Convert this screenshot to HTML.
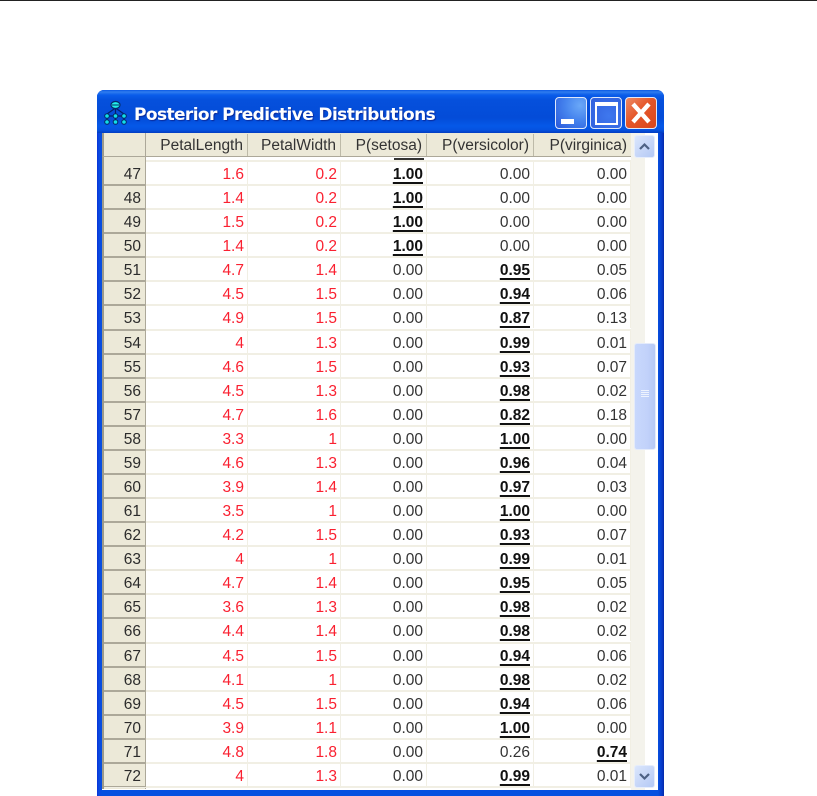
<!DOCTYPE html>
<html>
<head>
<meta charset="utf-8">
<style>
html,body{margin:0;padding:0;width:817px;height:796px;background:#fff;overflow:hidden}
body{position:relative;font-family:"Liberation Sans",sans-serif}
#top{position:absolute;left:0;top:0;width:817px;height:1px;background:#222}
#win{position:absolute;left:97px;top:90px;width:567px;height:706px;background:linear-gradient(90deg,#0831d9 0,#0a4be0 2px,#0a4be0 3px,#0650e0 5px,#0650e0 561px,#0638c8 565px,#0428a8 567px);border-radius:7px 7px 0 0;overflow:hidden}
#tb{position:absolute;left:0;top:0;width:567px;height:43px;background:linear-gradient(180deg,#0a58e4 0,#2f7cef 2px,#0a5cea 5px,#0550dc 10px,#044cd8 28px,#0558e8 36px,#0552e0 40px,#033cc0 43px)}
#title{position:absolute;left:37px;top:15px;color:#fff;font:bold 17px "DejaVu Sans",sans-serif;letter-spacing:-.6px;white-space:nowrap;text-shadow:1px 1px 1px #0a2a9a}
#icon{position:absolute;left:6px;top:10px}
.b{position:absolute;top:7px;width:32px;height:32px;box-sizing:border-box;border:1px solid #dfe8fb;border-radius:4px}
#min{left:458px;background:radial-gradient(circle at 80% 25%,#6aa8f8 0,#4684ee 45%,#2a58da 100%)}
#min i{position:absolute;left:5px;top:21px;width:13px;height:5px;background:#fff}
#max{left:493px;background:radial-gradient(circle at 60% 60%,#3f78ee 0,#2f5edc 100%)}
#max i{position:absolute;left:4px;top:4px;width:23px;height:23px;box-sizing:border-box;border:2px solid #fff;border-top-width:4px}
#cls{left:528px;background:linear-gradient(135deg,#ec8a66 0,#e5562a 45%,#d8461c 100%)}
#cls svg{position:absolute;left:0;top:0}
#client{position:absolute;left:5px;top:43px;width:556px;height:657px;background:#fff;overflow:hidden}
#hdr{position:absolute;left:0;top:0;width:529px;height:23px;background:#ece9d8;border-bottom:1px solid #aca899;font-size:15.5px;color:#333}
.h{position:absolute;top:1px;height:22px;line-height:24px;text-align:right;border-right:1px solid #bdbaa8;box-sizing:border-box;padding-right:4px}
#rh{position:absolute;left:0;top:24px;width:44px;height:632px;background:#ece9d8;border-left:2px solid #9c9a8c;border-right:1px solid #aca899;box-sizing:border-box}
#hh{position:absolute;left:0;top:0;width:44px;height:24px;border-left:2px solid #9c9a8c;border-right:1px solid #aca899;border-bottom:1px solid #aca899;box-sizing:border-box}
#part{position:absolute;left:44px;top:24px;width:485px;height:5px;background:#fff;border-bottom:2px solid #f1efe4;box-sizing:border-box}
#u{position:absolute;left:292px;top:25px;width:30px;height:2px;background:#333}
#rows{position:absolute;left:3px;top:29px;width:526px;font-size:15.5px;color:#333}
.r{position:relative;height:24.08px;box-sizing:border-box;border-bottom:2px solid #f1efe4}
.r span{position:absolute;top:0;height:22px;line-height:25px;text-align:right;box-sizing:border-box;padding-right:3px;border-right:1px solid #f1efe4}
.r span:nth-child(1){left:0;width:41px;background:#ece9d8;padding-right:4px;color:#2c2c2c;border-right:1px solid #aca899}
.r span:nth-child(2){left:41px;width:102px;color:#fa2030}
.r span:nth-child(3){left:143px;width:93px;color:#fa2030}
.r span:nth-child(4){left:236px;width:86px}
.r span:nth-child(5){left:322px;width:107px}
.r span:nth-child(6){left:429px;width:97px}
.r::before{content:"";position:absolute;left:-1px;right:485px;bottom:-2px;height:2px;background:#aca899}
.r:last-child::before{height:1px;bottom:-1px}
b{color:#111;text-decoration:underline;text-decoration-thickness:1.5px;text-underline-offset:2.5px}
#sb{position:absolute;left:529px;top:0;width:27px;height:657px;background:linear-gradient(90deg,#f4f3ec 0,#f4f3ec 14px,#fff 14px,#fff 27px)}
.sbb{position:absolute;left:3px;width:21px;height:23px;box-sizing:border-box;border:1px solid #e6edfb;border-radius:3px;background:linear-gradient(135deg,#dbe6fc,#b4c9f5)}
#thumb{position:absolute;left:3px;top:210px;width:22px;height:107px;box-sizing:border-box;border:1px solid #e4ebfa;border-radius:3px;background:linear-gradient(90deg,#c8d8fc,#c2d2fa 60%,#b6c9f5)}
#thumb i{position:absolute;left:6px;height:1px;width:8px;background:#eef3fe}
#botw{position:absolute;left:0;top:656px;width:556px;height:1px;background:#fff}
</style>
</head>
<body>
<div id="top"></div>
<div id="win">
<div id="tb"></div>
<svg id="icon" width="28" height="26" viewBox="0 0 28 26">
<path d="M12.5 6V22M12.5 8L4 14M12.5 8L21 14M4 15V22M21 15V22M4 16H21" stroke="#03206a" fill="none" stroke-width="1.2"/>
<ellipse cx="12.5" cy="5" rx="4.5" ry="3.5" fill="#20f0e8" stroke="#042a68" stroke-width="1.2"/>
<path d="M9 5H16" stroke="#042a68" stroke-width="1"/>
<g fill="#10e0e8" stroke="#042a68" stroke-width="1">
<circle cx="4" cy="16" r="2.3"/><circle cx="12.5" cy="16" r="2.3"/><circle cx="21" cy="16" r="2.3"/>
<circle cx="4" cy="22" r="2.3"/><circle cx="12.5" cy="22" r="2.3"/><circle cx="21" cy="22" r="2.3"/>
</g>
</svg>
<div id="title">Posterior Predictive Distributions</div>
<div class="b" id="min"><i></i></div>
<div class="b" id="max"><i></i></div>
<div class="b" id="cls"><svg width="30" height="30" viewBox="0 0 30 30"><path d="M7 6L23 24M23 6L7 24" stroke="#fff" stroke-width="4.4" fill="none"/></svg></div>
<div id="client">
<div id="hdr">
<div class="h" style="left:44px;width:102px">PetalLength</div>
<div class="h" style="left:146px;width:93px">PetalWidth</div>
<div class="h" style="left:239px;width:86px">P(setosa)</div>
<div class="h" style="left:325px;width:107px">P(versicolor)</div>
<div class="h" style="left:432px;width:97px;border:0">P(virginica)</div>
</div>
<div id="hh"></div>
<div id="rh"></div>
<div id="part"></div>
<div id="u"></div>
<div id="rows">
<div class="r"><span>47</span><span>1.6</span><span>0.2</span><span><b>1.00</b></span><span>0.00</span><span>0.00</span></div>
<div class="r"><span>48</span><span>1.4</span><span>0.2</span><span><b>1.00</b></span><span>0.00</span><span>0.00</span></div>
<div class="r"><span>49</span><span>1.5</span><span>0.2</span><span><b>1.00</b></span><span>0.00</span><span>0.00</span></div>
<div class="r"><span>50</span><span>1.4</span><span>0.2</span><span><b>1.00</b></span><span>0.00</span><span>0.00</span></div>
<div class="r"><span>51</span><span>4.7</span><span>1.4</span><span>0.00</span><span><b>0.95</b></span><span>0.05</span></div>
<div class="r"><span>52</span><span>4.5</span><span>1.5</span><span>0.00</span><span><b>0.94</b></span><span>0.06</span></div>
<div class="r"><span>53</span><span>4.9</span><span>1.5</span><span>0.00</span><span><b>0.87</b></span><span>0.13</span></div>
<div class="r"><span>54</span><span>4</span><span>1.3</span><span>0.00</span><span><b>0.99</b></span><span>0.01</span></div>
<div class="r"><span>55</span><span>4.6</span><span>1.5</span><span>0.00</span><span><b>0.93</b></span><span>0.07</span></div>
<div class="r"><span>56</span><span>4.5</span><span>1.3</span><span>0.00</span><span><b>0.98</b></span><span>0.02</span></div>
<div class="r"><span>57</span><span>4.7</span><span>1.6</span><span>0.00</span><span><b>0.82</b></span><span>0.18</span></div>
<div class="r"><span>58</span><span>3.3</span><span>1</span><span>0.00</span><span><b>1.00</b></span><span>0.00</span></div>
<div class="r"><span>59</span><span>4.6</span><span>1.3</span><span>0.00</span><span><b>0.96</b></span><span>0.04</span></div>
<div class="r"><span>60</span><span>3.9</span><span>1.4</span><span>0.00</span><span><b>0.97</b></span><span>0.03</span></div>
<div class="r"><span>61</span><span>3.5</span><span>1</span><span>0.00</span><span><b>1.00</b></span><span>0.00</span></div>
<div class="r"><span>62</span><span>4.2</span><span>1.5</span><span>0.00</span><span><b>0.93</b></span><span>0.07</span></div>
<div class="r"><span>63</span><span>4</span><span>1</span><span>0.00</span><span><b>0.99</b></span><span>0.01</span></div>
<div class="r"><span>64</span><span>4.7</span><span>1.4</span><span>0.00</span><span><b>0.95</b></span><span>0.05</span></div>
<div class="r"><span>65</span><span>3.6</span><span>1.3</span><span>0.00</span><span><b>0.98</b></span><span>0.02</span></div>
<div class="r"><span>66</span><span>4.4</span><span>1.4</span><span>0.00</span><span><b>0.98</b></span><span>0.02</span></div>
<div class="r"><span>67</span><span>4.5</span><span>1.5</span><span>0.00</span><span><b>0.94</b></span><span>0.06</span></div>
<div class="r"><span>68</span><span>4.1</span><span>1</span><span>0.00</span><span><b>0.98</b></span><span>0.02</span></div>
<div class="r"><span>69</span><span>4.5</span><span>1.5</span><span>0.00</span><span><b>0.94</b></span><span>0.06</span></div>
<div class="r"><span>70</span><span>3.9</span><span>1.1</span><span>0.00</span><span><b>1.00</b></span><span>0.00</span></div>
<div class="r"><span>71</span><span>4.8</span><span>1.8</span><span>0.00</span><span>0.26</span><span><b>0.74</b></span></div>
<div class="r"><span>72</span><span>4</span><span>1.3</span><span>0.00</span><span><b>0.99</b></span><span>0.01</span></div>
</div>
<div id="botw"></div>
<div id="sb">
<div class="sbb" style="top:2px"><svg width="19" height="21" viewBox="0 0 19 21"><path d="M5 13L9.5 8.5L14 13" stroke="#4d6185" stroke-width="2.2" fill="none"/></svg></div>
<div id="thumb"><i style="top:46px"></i><i style="top:48px"></i><i style="top:50px"></i><i style="top:52px"></i></div>
<div class="sbb" style="top:632px"><svg width="19" height="21" viewBox="0 0 19 21"><path d="M5 8L9.5 12.5L14 8" stroke="#4d6185" stroke-width="2.2" fill="none"/></svg></div>
</div>
</div>
</div>
</body>
</html>
